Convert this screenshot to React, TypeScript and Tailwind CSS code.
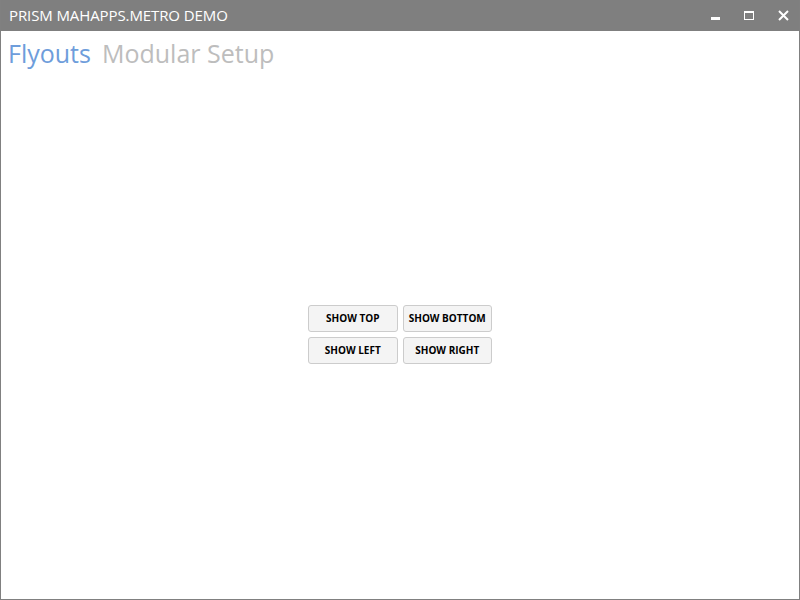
import React from "react";

const font = { fontFamily: '"Open Sans", "Noto Sans", "Liberation Sans", sans-serif' };

function App() {
  const buttons = ["SHOW TOP", "SHOW BOTTOM", "SHOW LEFT", "SHOW RIGHT"];
  return (
    <div
      className="w-[800px] h-[600px] flex flex-col border border-[#808080] border-t-0 bg-white overflow-hidden"
      style={font}
    >
      {/* title bar */}
      <div className="h-[31px] bg-[#7f7f7f] flex items-center justify-between shrink-0 -mx-px">
        <span className="pl-[9px] text-white text-[15px] tracking-[-0.1px]">
          PRISM MAHAPPS.METRO DEMO
        </span>
        <div className="flex items-center h-full">
          <div className="w-[34px] h-full flex items-center justify-center">
            <div className="w-[9px] h-[3px] bg-white mt-[6px]" />
          </div>
          <div className="w-[34px] h-full flex items-center justify-center">
            <div className="w-[10px] h-[9px] border border-white border-t-[2px]" />
          </div>
          <div className="w-[34px] h-full flex items-center justify-center">
            <svg width="11" height="11" viewBox="0 0 11 11">
              <path d="M1 1 L10 10 M10 1 L1 10" stroke="white" strokeWidth="2" />
            </svg>
          </div>
        </div>
      </div>

      {/* tabs */}
      <div className="flex items-baseline gap-[11px] pl-[7px] pt-[3px] text-[25px] leading-[38px]">
        <span className="text-[#6e9ddb]">Flyouts</span>
        <span className="text-[#bdbdbd]">Modular Setup</span>
      </div>

      {/* content */}
      <div className="flex-1 flex items-center justify-center">
        <div className="grid grid-cols-2 gap-x-[5px] gap-y-[5px] w-[184px] mt-[-3px]">
          {buttons.map((b) => (
            <button
              key={b}
              className="h-[27px] rounded-[3px] border border-[#cccccc] bg-[#f4f4f4] text-[10px] font-bold text-black"
            >
              {b}
            </button>
          ))}
        </div>
      </div>
    </div>
  );
}

export default App;
